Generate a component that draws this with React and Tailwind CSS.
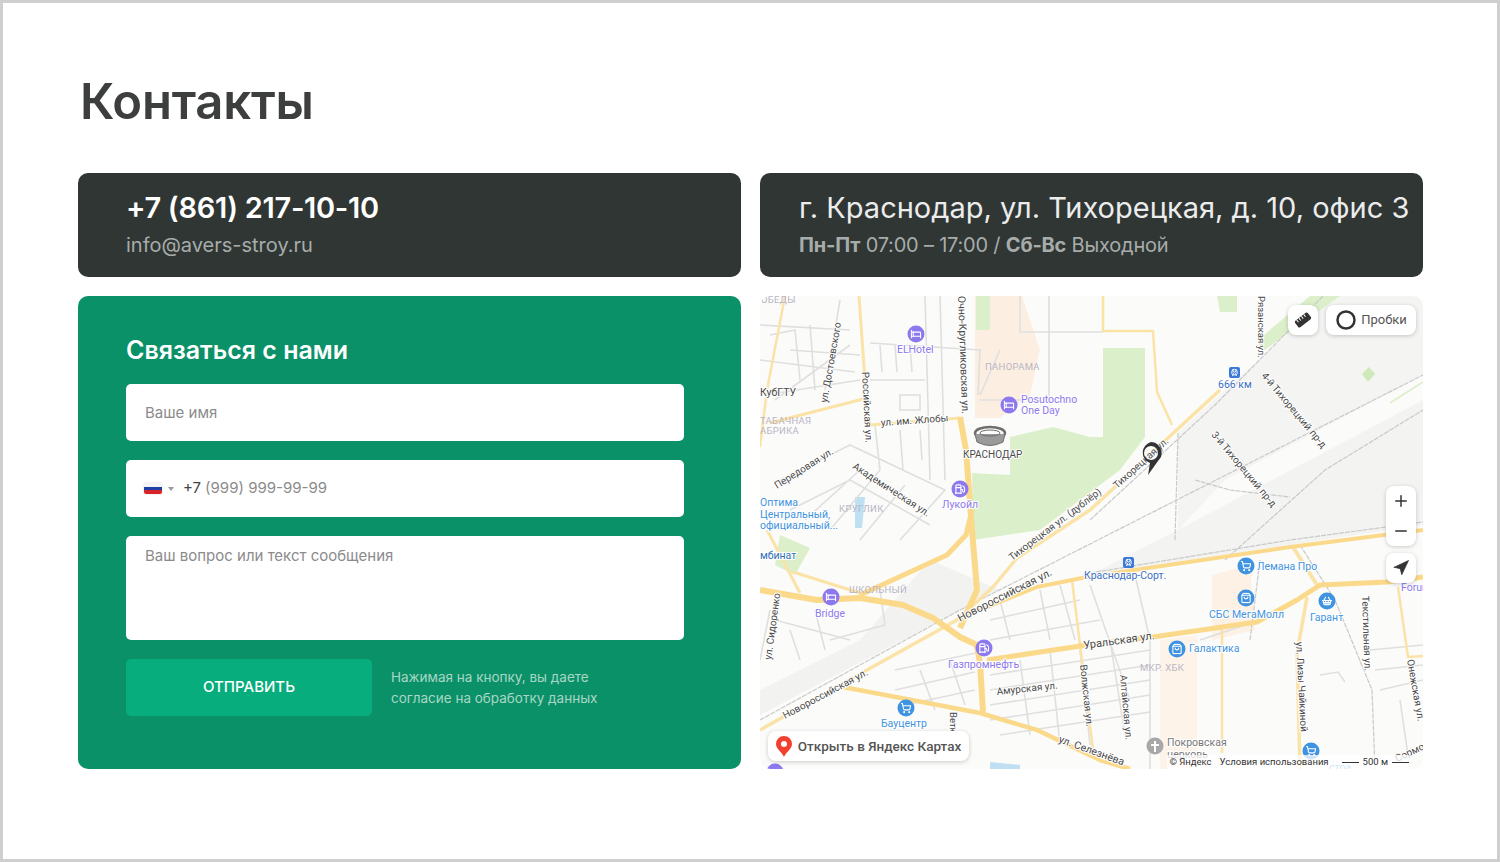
import React from 'react';
import { Bed, Fuel, ShoppingCart, ShoppingBag, ShoppingBasket, TrainFront, Plus, Minus, Navigation } from 'lucide-react';

const majorRoads = [
  { d: 'M760 590 L817 600 L860 598 L903 605 L933 618 L960 637 L977 645', w: 6 },
  { d: 'M860 595 L947 555 L966 535 L972 510', w: 5 },
  { d: 'M960 417 L966 450 L972 530 L977 590 L960 628', w: 6 },
  { d: 'M977 645 L980 663 L983 712', w: 6 },
  { d: 'M987 660 L1087 645 L1153 637 L1257 622 L1297 600 L1320 585 L1387 582 L1423 577', w: 5 },
  { d: 'M843 687 L980 713 L1037 730 L1100 760 L1130 769', w: 4.5 },
  { d: 'M960 618 L1037 587 L1087 577 L1290 547 L1423 530', w: 4 },
];

const minorRoads = [
  { d: 'M859 296 L866 395 L870 425 L960 418', w: 3 },
  { d: 'M867 398 L770 423', w: 3 },
  { d: 'M785 296 L767 390 L760 447', w: 2.5 },
  { d: 'M767 530 L800 593', w: 3 },
  { d: 'M793 572 L860 593', w: 3 },
  { d: 'M760 730 L783 717 L867 670 L957 620 L993 587 L1017 558 L1090 510 L1220 390', w: 3.5 },
  { d: 'M1293 547 L1317 585', w: 4 },
  { d: 'M1072 580 L1093 750', w: 2.5 },
  { d: 'M1222 627 L1222 753', w: 2.5 },
  { d: 'M1307 597 L1297 653 L1300 769', w: 3.5 },
  { d: 'M1398 587 L1408 657 L1423 656', w: 2.5 },
  { d: 'M1103 331 L1153 331 L1157 392 L1172 425', w: 2.5 },
  { d: 'M1103 296 L1103 331', w: 2.5 },
];

const streets = [
  'M760 325 L850 330 M760 360 L855 372 M765 395 L860 380 M775 400 L850 345',
  'M770 335 L795 330 L800 380 M810 325 L815 390 M840 300 L825 390 M790 350 L860 355',
  'M870 343 L980 350 L978 395 M870 380 L925 380 M880 345 L882 372 M895 345 L897 372 M910 345 L912 372',
  'M925 296 L930 480 M940 296 L945 480 M900 395 L920 395 L920 410 L900 410 Z',
  'M780 480 L850 445 L945 490 L900 540 M790 510 L850 480 L930 525 M805 520 L860 470 M830 530 L880 470 M860 540 L905 485',
  'M875 425 L880 470 M900 430 L903 470 M920 430 L922 460',
  'M1020 296 L1020 332 L1103 332 M1049 296 L1049 400 M980 400 L1075 400 M1000 350 L980 395',
  'M770 610 L760 660 M775 620 L850 640 M790 630 L800 660 M815 610 L825 650 M880 590 L885 625 L830 640',
  'M990 620 L1080 600 M990 640 L1100 620 M1000 600 L1010 640 M1040 590 L1050 640 M1060 585 L1075 640 M1090 585 L1130 700',
  'M990 675 L1150 650 M990 690 L1150 665 M990 705 L1150 680 M990 720 L1150 695 M1000 735 L1150 712 M1020 660 L1030 735 M1050 650 L1060 745 M1080 650 L1090 745 M1110 640 L1125 735',
  'M895 670 L990 650 M895 690 L975 672 M905 705 L975 690 M920 670 L935 710 M950 660 L965 705',
  'M1150 640 L1150 769 M1200 640 L1245 625 M1320 675 L1338 672 L1345 682 M1135 575 L1150 640',
  'M1370 650 L1423 645 M1375 670 L1423 665 M1380 690 L1423 680 M1400 700 L1410 769',
];

const rails = [
  'M1090 520 L1215 405 L1323 296',
  'M1090 573 L1290 540 L1423 522',
  'M760 720 L960 610 L1423 375',
  'M1250 640 L1260 560 M1300 545 L1335 600 L1372 690 L1375 769',
  'M1178 433 L1175 540 M1195 480 L1230 490 L1290 497 M1225 560 L1325 470 L1423 410',
];

const labels = [
  { t: 'Российская ул.', x: 862, y: 372, r: 87, s: 10 },
  { t: 'ул. Достоевского', x: 827, y: 403, r: -80, s: 10 },
  { t: 'Очно-Кругликовская ул.', x: 958, y: 296, r: 88, s: 10.5 },
  { t: 'ул. им. Жлобы', x: 881, y: 426, r: -4, s: 10 },
  { t: 'Передовая ул.', x: 777, y: 489, r: -32, s: 10 },
  { t: 'Академическая ул.', x: 852, y: 468, r: 33, s: 10 },
  { t: 'Тихорецкая ул. (дублёр)', x: 1012, y: 561, r: -37, s: 10 },
  { t: 'Тихорецкая ул.', x: 1117, y: 489, r: -42, s: 10 },
  { t: '4-й Тихорецкий пр-д', x: 1261, y: 376, r: 50, s: 10 },
  { t: '3-й Тихорецкий пр-д', x: 1211, y: 435, r: 50, s: 10 },
  { t: 'Рязанская ул.', x: 1258, y: 296, r: 90, s: 9.5 },
  { t: 'Новороссийская ул.', x: 960, y: 622, r: -27, s: 11 },
  { t: 'Новороссийская ул.', x: 785, y: 719, r: -28, s: 10 },
  { t: 'Уральская ул.', x: 1084, y: 649, r: -8, s: 11 },
  { t: 'Амурская ул.', x: 997, y: 695, r: -6, s: 10 },
  { t: 'Волжская ул.', x: 1080, y: 665, r: 84, s: 10 },
  { t: 'Алтайская ул.', x: 1120, y: 675, r: 85, s: 10 },
  { t: 'ул. Сидоренко', x: 771, y: 660, r: -82, s: 10 },
  { t: 'ул. Селезнёва', x: 1058, y: 742, r: 20, s: 10.5 },
  { t: 'ул. Лизы Чайкиной', x: 1296, y: 642, r: 87, s: 10 },
  { t: 'Текстильная ул.', x: 1362, y: 596, r: 88, s: 10 },
  { t: 'Онежская ул.', x: 1407, y: 660, r: 80, s: 10 },
  { t: 'Сормо', x: 1397, y: 762, r: -25, s: 10 },
  { t: 'Ветка', x: 950, y: 712, r: 90, s: 9.5 },
  { t: 'КубГТУ', x: 760, y: 396, s: 10.5 },
  { t: 'КРАСНОДАР', x: 963, y: 458, s: 10 },
];

const areaLabels = [
  { t: 'ОБЕДЫ', x: 761, y: 303 },
  { t: 'ПАНОРАМА', x: 985, y: 370 },
  { t: 'ТАБАЧНАЯ', x: 760, y: 424 },
  { t: 'АБРИКА', x: 760, y: 434 },
  { t: 'КРУГЛИК', x: 839, y: 512 },
  { t: 'ШКОЛЬНЫЙ', x: 849, y: 593 },
  { t: 'МКР. ХБК', x: 1140, y: 671 },
];

const poiLabels = [
  { t: 'ELHotel', x: 897, y: 353, c: '#8d78ee' },
  { t: 'Posutochno', x: 1021, y: 403, c: '#8d78ee' },
  { t: 'One Day', x: 1021, y: 414, c: '#8d78ee' },
  { t: 'Лукойл', x: 942, y: 508, c: '#8d78ee' },
  { t: 'Bridge', x: 815, y: 617, c: '#8d78ee' },
  { t: 'Газпромнефть', x: 948, y: 668, c: '#8d78ee' },
  { t: 'Forum', x: 1401, y: 591, c: '#8d78ee' },
  { t: 'Оптима', x: 760, y: 506, c: '#3f93e0' },
  { t: 'Центральный,', x: 760, y: 518, c: '#3f93e0' },
  { t: 'официальный...', x: 760, y: 529, c: '#3f93e0' },
  { t: 'мбинат', x: 760, y: 559, c: '#2f6fb5' },
  { t: '666 км', x: 1218, y: 388, c: '#3b6fc4' },
  { t: 'Краснодар-Сорт.', x: 1084, y: 579, c: '#3b6fc4' },
  { t: 'Лемана Про', x: 1257, y: 570, c: '#3f93e0' },
  { t: 'СБС МегаМолл', x: 1209, y: 618, c: '#3f93e0' },
  { t: 'Гарант', x: 1310, y: 621, c: '#3f93e0' },
  { t: 'Галактика', x: 1189, y: 652, c: '#3f93e0' },
  { t: 'Бауцентр', x: 881, y: 727, c: '#3f93e0' },
  { t: 'Покровская', x: 1167, y: 746, c: '#777777' },
  { t: 'церковь', x: 1167, y: 758, c: '#777777' },
  { t: 'стра', x: 1329, y: 771, c: '#3f93e0' },
];

const pois = [
  { x: 916, y: 334, c: '#8d78ee', I: Bed },
  { x: 1009, y: 405, c: '#8d78ee', I: Bed },
  { x: 960, y: 489, c: '#8d78ee', I: Fuel },
  { x: 831, y: 597, c: '#8d78ee', I: Bed },
  { x: 984, y: 648, c: '#8d78ee', I: Fuel },
  { x: 906, y: 708, c: '#3f93e0', I: ShoppingCart },
  { x: 1246, y: 566, c: '#3f93e0', I: ShoppingCart },
  { x: 1246, y: 598, c: '#3f93e0', I: ShoppingBag },
  { x: 1327, y: 601, c: '#3f93e0', I: ShoppingBasket },
  { x: 1177, y: 649, c: '#3f93e0', I: ShoppingBag },
  { x: 1311, y: 751, c: '#3f93e0', I: ShoppingCart },
];

function MapDrawing() {
  const font = 'Roboto, "Noto Sans", sans-serif';
  return (
    <svg className="block w-full h-full" viewBox="760 296 663 473" style={{ fontFamily: font }}>
      <rect x="760" y="296" width="663" height="473" fill="#fbfbf9" />

      {/* industrial zones */}
      <path d="M1178 433 L1225 390 L1330 296 L1423 296 L1423 375 L1225 480 L1178 530 Z" fill="#f4f4f3" />
      <path d="M1090 575 L1178 530 L1423 400 L1423 525 L1290 545 Z" fill="#f3f3f2" />
      <path d="M760 715 L960 610 L1000 590 L930 560 L860 640 L760 690 Z" fill="#f2f2f1" />

      {/* residential */}
      <path d="M975 296 L1022 296 L1040 350 L1030 395 L1000 418 L975 418 Z" fill="#fcefe2" />
      <path d="M1160 640 L1197 635 L1197 769 L1160 769 Z" fill="#fdf3e9" />
      <path d="M1212 575 L1250 565 L1255 630 L1212 640 Z" fill="#fdf1e6" />

      {/* parks */}
      <path d="M1103 348 L1145 348 L1145 437 L1120 470 L1040 530 L973 540 L972 473 L1010 475 L1010 437 L1053 427 L1090 437 L1103 437 Z" fill="#dcefcb" />
      <path d="M780 535 L810 548 L795 575 L775 565 Z" fill="#dcefcb" />
      <path d="M1217 296 L1237 296 L1237 312 L1220 312 Z" fill="#dcefcb" />
      <path d="M1258 340 L1310 296 L1340 296 L1262 352 Z" fill="#dcefcb" />
      <path d="M1362 374 L1369 367 L1375 374 L1368 382 Z" fill="#cfeab8" />
      <path d="M1390 403 L1423 382" stroke="#dcefcb" strokeWidth="1.5" />
      <path d="M976 296 L990 296 L990 330 L976 330 Z" fill="#dcefcb" />

      {/* water */}
      <path d="M855 497 L865 497 L862 528 L855 528 Z" fill="#bfe0f3" />
      <path d="M990 762 L1020 765 L1020 769 L990 769 Z" fill="#bfe0f3" />

      {streets.map((d, i) => (
        <path key={i} d={d} fill="none" stroke="#dfdfdf" strokeWidth="1.6" />
      ))}
      {rails.map((d, i) => (
        <path key={i} d={d} fill="none" stroke="#c9c9c9" strokeWidth="1.2" strokeDasharray="5 1" />
      ))}
      {minorRoads.map((r, i) => (
        <path key={i} d={r.d} fill="none" stroke="#fbe3a8" strokeWidth={r.w} strokeLinejoin="round" />
      ))}
      {majorRoads.map((r, i) => (
        <path key={i} d={r.d} fill="none" stroke="#fbd98a" strokeWidth={r.w} strokeLinejoin="round" />
      ))}

      {/* stadium */}
      <g fill="none" stroke="#6f6f6f">
        <ellipse cx="990" cy="433" rx="15" ry="6" strokeWidth="2.5" />
        <path d="M975 434 L977 442 Q990 449 1003 442 L1005 434" fill="#9a9a9a" strokeWidth="1" />
        <ellipse cx="990" cy="433" rx="10" ry="3" strokeWidth="1" />
      </g>

      {pois.map((p, i) => (
        <g key={i}>
          <circle cx={p.x} cy={p.y} r="8.5" fill={p.c} />
          <p.I x={p.x - 5.5} y={p.y - 5.5} width="11" height="11" color="#fff" strokeWidth={2.4} />
        </g>
      ))}
      <circle cx="775" cy="772" r="8.5" fill="#8d78ee" />
      <circle cx="1155" cy="746" r="8.5" fill="#a8a8a8" />
      <path d="M1155 741 V752 M1151 745 H1159" stroke="#fff" strokeWidth="2" />

      {/* stations */}
      <rect x="1229" y="367" width="11" height="11" rx="2" fill="#3b78d8" />
      <TrainFront x="1230.5" y="368.5" width="8" height="8" color="#fff" strokeWidth={3} />
      <rect x="1123" y="557" width="11" height="11" rx="2" fill="#3b78d8" />
      <TrainFront x="1124.5" y="558.5" width="8" height="8" color="#fff" strokeWidth={3} />

      {labels.map((l, i) => (
        <text
          key={i}
          x={l.x}
          y={l.y}
          fontSize={l.s}
          fill="#4a4a4a"
          stroke="#fff"
          strokeWidth="2"
          paintOrder="stroke"
          transform={l.r ? `rotate(${l.r} ${l.x} ${l.y})` : undefined}
        >
          {l.t}
        </text>
      ))}
      {areaLabels.map((l, i) => (
        <text key={i} x={l.x} y={l.y} fontSize="9.5" letterSpacing="0.3" fill="#b9b5c4">
          {l.t}
        </text>
      ))}
      {poiLabels.map((l, i) => (
        <text key={i} x={l.x} y={l.y} fontSize="10.5" fill={l.c} stroke="#fff" strokeWidth="2" paintOrder="stroke">
          {l.t}
        </text>
      ))}

      {/* marker */}
      <path
        fillRule="evenodd"
        d="M1151 442 A11 11 0 0 1 1158 461 L1148 475 L1150 463 A11 11 0 0 1 1151 442 Z M1151 446 A7 7 0 1 0 1151 460 A7 7 0 1 0 1151 446 Z"
        fill="#333"
      />
    </svg>
  );
}

function MapControls() {
  const btn = 'absolute bg-white rounded-lg shadow-[0_1px_4px_rgba(0,0,0,0.2)] flex items-center justify-center';
  return (
    <>
      <div className={`${btn} top-[9px] left-[528px] w-[30px] h-[30px]`}>
        <svg width="18" height="18" viewBox="0 0 18 18">
          <g transform="rotate(-38 9 9)">
            <rect x="1" y="5" width="16" height="8" rx="1.5" fill="#333" />
            <path d="M4 5 V8 M7 5 V8 M10 5 V8 M13 5 V8" stroke="#fff" strokeWidth="1" />
          </g>
        </svg>
      </div>
      <div className={`${btn} top-[9px] left-[566px] w-[90px] h-[30px] gap-[4px]`}>
        <svg width="22" height="22" viewBox="0 0 22 22">
          <circle cx="11" cy="11" r="8.5" fill="#fff" stroke="#333" strokeWidth="2.5" />
        </svg>
        <span className="text-[13px] text-[#555] font-['Roboto',sans-serif]">Пробки</span>
      </div>
      <div className={`${btn} top-[190px] left-[626px] w-[30px] h-[60px] flex-col`}>
        <Plus size={18} color="#333" strokeWidth={2} className="mb-[12px]" />
        <Minus size={18} color="#333" strokeWidth={2} />
      </div>
      <div className={`${btn} top-[257px] left-[626px] w-[30px] h-[30px]`}>
        <Navigation size={18} color="#333" fill="#333" strokeWidth={1} className="-rotate-[0deg]" />
      </div>
      <div className={`${btn} top-[435px] left-[8px] w-[201px] h-[30px] gap-[6px]`}>
        <svg width="16" height="21" viewBox="0 0 16 21">
          <path d="M8 0 A8 8 0 0 1 16 8 C16 13 10 16 8 21 C6 16 0 13 0 8 A8 8 0 0 1 8 0 Z" fill="#f43f2e" />
          <circle cx="8" cy="8" r="3" fill="#fff" />
        </svg>
        <span className="text-[13.5px] font-medium text-[#555] font-['Roboto',sans-serif]">Открыть в Яндекс Картах</span>
      </div>
      <div className="absolute bottom-0 right-[12px] h-[14px] flex items-center gap-[8px] bg-white/75 px-[2px] text-[9.5px] text-[#333] font-['Roboto',sans-serif]">
        <span>© Яндекс</span>
        <span>Условия использования</span>
        <span className="flex items-center gap-[4px] ml-[5px]">
          <span className="w-[17px] h-px bg-[#333]" />
          500 м
          <span className="w-[17px] h-px bg-[#333]" />
        </span>
      </div>
    </>
  );
}

export default function App() {
  return (
    <div className="w-[1500px] h-[862px] border-[3px] border-[#cfcfcf] bg-white font-['Inter','Noto_Sans',sans-serif] overflow-hidden">
      <div className="pl-[75px] pt-[69px]">
        <h1 className="text-[49px] leading-[60px] font-semibold text-[#3c3f3e] pl-[2px] tracking-[-0.2px]">Контакты</h1>

        <div className="mt-[41px] grid grid-cols-[663px_663px] gap-[19px]">
          {/* Contacts */}
          <div className="h-[104px] bg-[#2f3634] rounded-[10px] pl-[48px] pt-[17px]">
            <div className="text-[29px] leading-[36px] font-semibold text-white tracking-[-0.3px]">+7 (861) 217-10-10</div>
            <div className="mt-[5px] text-[20px] leading-[28px] text-[#a7acaa]">info@avers-stroy.ru</div>
          </div>

          {/* Address */}
          <div className="h-[104px] bg-[#2f3634] rounded-[10px] pl-[39px] pt-[17px]">
            <div className="text-[29px] leading-[36px] text-[#ececec] whitespace-nowrap">г. Краснодар, ул. Тихорецкая, д. 10, офис 3</div>
            <div className="mt-[5px] text-[20px] leading-[28px] text-[#a7acaa] tracking-[-0.2px]">
              <b className="font-bold">Пн-Пт</b> 07:00 – 17:00 / <b className="font-bold">Сб-Вс</b> Выходной
            </div>
          </div>

          {/* Form */}
          <div className="h-[473px] bg-[#0b9168] rounded-[10px] px-[48px] pt-[38px] pr-[57px]">
            <h2 className="text-[25px] leading-[32px] font-semibold text-white">Связаться с нами</h2>
            <div className="mt-[18px] flex flex-col gap-[19px]">
              <input
                className="h-[57px] w-full bg-white rounded-[5px] px-[19px] text-[15px] outline-none placeholder:text-[#8b8b8b]"
                placeholder="Ваше имя"
              />
              <div className="h-[57px] bg-white rounded-[5px] pl-[18px] flex items-center text-[15px]">
                <span className="w-[18px] h-[11px] rounded-[2px] overflow-hidden flex flex-col shadow-[0_0_2px_rgba(0,0,0,0.2)]">
                  <span className="flex-1 bg-[#f4f4f4]" />
                  <span className="flex-1 bg-[#1c3fa8]" />
                  <span className="flex-1 bg-[#d8232a]" />
                </span>
                <span className="ml-[6px] w-0 h-0 border-x-[3.5px] border-x-transparent border-t-[4px] border-t-[#999]" />
                <span className="ml-[9px] text-[#444]">+7</span>
                <span className="ml-[4px] text-[#8b8b8b]">(999) 999-99-99</span>
              </div>
              <textarea
                className="block h-[104px] w-full bg-white rounded-[5px] px-[19px] py-[10px] text-[15px] leading-[20px] resize-none outline-none placeholder:text-[#8b8b8b]"
                placeholder="Ваш вопрос или текст сообщения"
              />
              <div className="flex items-center gap-[19px]">
                <button className="w-[246px] h-[57px] bg-[#07ad7c] rounded-[5px] text-white text-[15px] font-medium">ОТПРАВИТЬ</button>
                <p className="text-[13.5px] leading-[21px] text-[#a9d6c6]">
                  Нажимая на кнопку, вы даете
                  <br />
                  согласие на обработку данных
                </p>
              </div>
            </div>
          </div>

          {/* Map */}
          <div className="relative h-[473px] rounded-[10px] overflow-hidden">
            <MapDrawing />
            <MapControls />
          </div>
        </div>
      </div>
    </div>
  );
}
